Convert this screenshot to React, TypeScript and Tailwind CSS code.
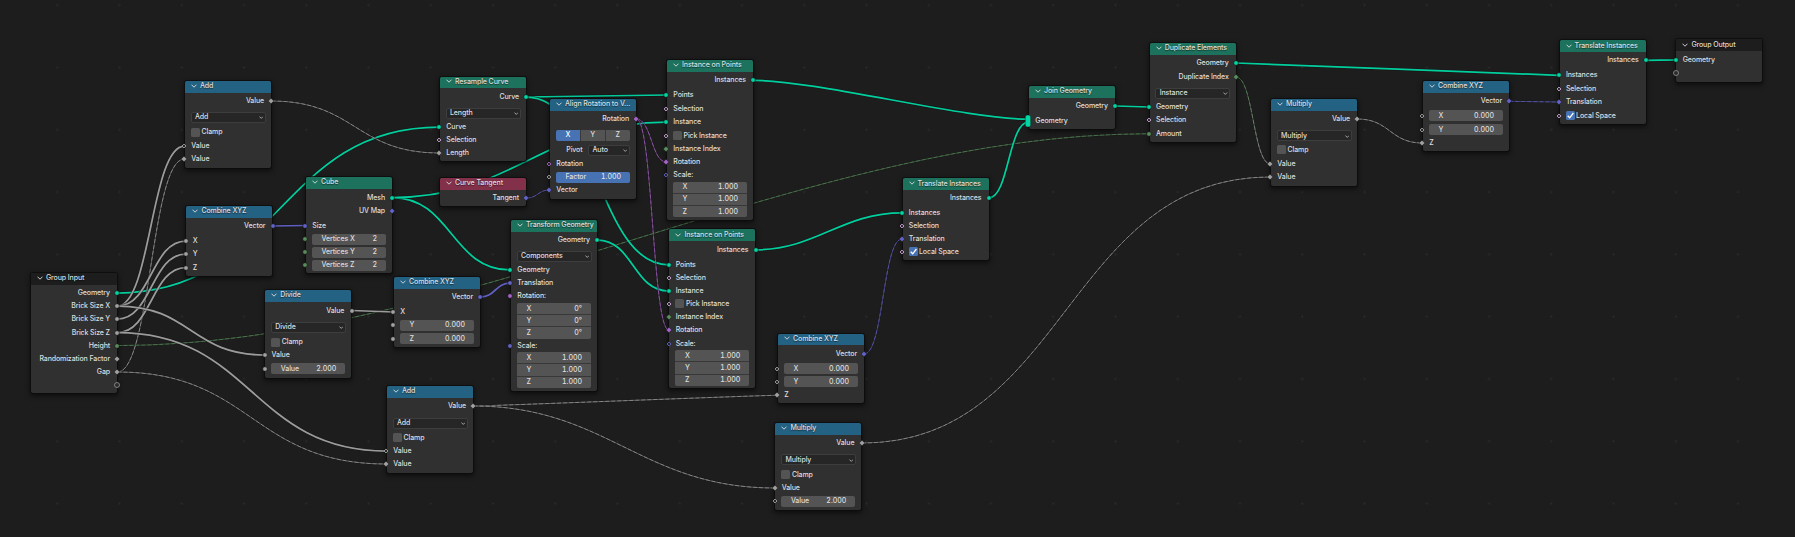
import React from "react";

type Shape = "circle" | "diamond" | "hollow" | "virtual" | "multi";
type Hue = "geo" | "val" | "vec" | "rot" | "int" | "bool";
type Row = {
  id?: string;
  y: number;
  kind?: "out" | "in" | "select" | "check" | "field" | "factor" | "stack" | "tabs" | "pivot";
  text?: string;
  value?: string | string[];
  on?: boolean;
  shape?: Shape;
  hue?: Hue;
};
type NodeDef = {
  id: string;
  title: string;
  tone: "blue" | "green" | "red" | "dark";
  tall?: boolean;
  x: number;
  y: number;
  h: number;
  rows: Row[];
};

const HUES: Record<Hue, string> = {
  geo: "#00d6a3",
  val: "#a1a1a1",
  vec: "#6363c7",
  rot: "#a663c7",
  int: "#598c5c",
  bool: "#cca6d6",
};

const W = 86;

const out = (id: string, y: number, text: string, hue: Hue, shape: Shape = "circle"): Row => ({ id, y, text, hue, shape, kind: "out" });
const inp = (id: string, y: number, text: string, hue: Hue, shape: Shape = "circle"): Row => ({ id, y, text, hue, shape, kind: "in" });
const sel = (y: number, text: string): Row => ({ y, text, kind: "select" });
const check = (y: number, text: string, on = false, hue?: Hue, shape?: Shape): Row => ({ y, text, on, hue, shape, kind: "check" });
const field = (y: number, text: string, value: string, hue: Hue, shape: Shape = "circle"): Row => ({ y, text, value, hue, shape, kind: "field" });
const stack = (y: number, value: string[]): Row => ({ y, value, kind: "stack" });

const ONES = ["1.000", "1.000", "1.000"];

const NODES: NodeDef[] = [
  { id: "gi", title: "Group Input", tone: "dark", x: 31, y: 273, h: 120, rows: [
    out("geo", 293, "Geometry", "geo"), out("x", 306, "Brick Size X", "val"), out("y", 319, "Brick Size Y", "val"),
    out("z", 332.5, "Brick Size Z", "val"), out("height", 345.5, "Height", "int"), out("rand", 358.5, "Randomization Factor", "val", "diamond"),
    out("gap", 372, "Gap", "val", "diamond"), out("v", 385, "", "val", "virtual"),
  ] },
  { id: "add1", title: "Add", tone: "blue", x: 185, y: 81, h: 87, rows: [
    out("o", 101, "Value", "val", "diamond"), sel(117, "Add"), check(132, "Clamp"),
    inp("a", 146, "Value", "val", "hollow"), inp("b", 159, "Value", "val", "diamond"),
  ] },
  { id: "c1", title: "Combine XYZ", tone: "blue", x: 186.4, y: 206, h: 69.5, rows: [
    out("o", 226, "Vector", "vec"), inp("x", 241, "X", "val"), inp("y", 254, "Y", "val"), inp("z", 267.5, "Z", "val"),
  ] },
  { id: "cube", title: "Cube", tone: "green", x: 306, y: 177, h: 96, rows: [
    out("o", 197.5, "Mesh", "geo"), out("uv", 210.5, "UV Map", "vec", "diamond"), inp("size", 225.5, "Size", "vec"),
    field(239, "Vertices X", "2", "int"), field(252, "Vertices Y", "2", "int"), field(265, "Vertices Z", "2", "int"),
  ] },
  { id: "div", title: "Divide", tone: "blue", x: 265.3, y: 290, h: 87.5, rows: [
    out("o", 310.5, "Value", "val"), sel(327, "Divide"), check(342, "Clamp"), inp("a", 355, "Value", "val"), field(368.5, "Value", "2.000", "val"),
  ] },
  { id: "c2", title: "Combine XYZ", tone: "blue", x: 394, y: 277, h: 69.5, rows: [
    out("o", 297, "Vector", "vec"), inp("x", 312, "X", "val"), field(325, "Y", "0.000", "val"), field(338.5, "Z", "0.000", "val"),
  ] },
  { id: "res", title: "Resample Curve", tone: "green", x: 440, y: 76.5, h: 84, rows: [
    out("o", 97, "Curve", "geo"), sel(113, "Length"), inp("curve", 127, "Curve", "geo"),
    inp("sel", 140, "Selection", "bool", "hollow"), inp("len", 153, "Length", "val", "diamond"),
  ] },
  { id: "tan", title: "Curve Tangent", tone: "red", x: 440, y: 178, h: 28, rows: [out("o", 198, "Tangent", "vec", "diamond")] },
  { id: "align", title: "Align Rotation to V…", tone: "blue", x: 550, y: 99, h: 99.5, rows: [
    out("o", 119, "Rotation", "rot", "diamond"), { y: 135.5, kind: "tabs" }, { y: 150, kind: "pivot", text: "Pivot", value: "Auto" },
    inp("rot", 164, "Rotation", "rot", "hollow"), { y: 177, kind: "factor", text: "Factor", value: "1.000", hue: "val", shape: "hollow" },
    inp("vec", 190, "Vector", "vec", "diamond"),
  ] },
  { id: "tg", title: "Transform Geometry", tone: "green", x: 511, y: 220, h: 170.5, rows: [
    out("o", 240, "Geometry", "geo"), sel(256, "Components"), inp("geo", 270, "Geometry", "geo"), inp("tr", 283, "Translation", "vec"),
    inp("rot", 296, "Rotation:", "rot"), stack(320.8, ["0°", "0°", "0°"]), inp("sc", 345.8, "Scale:", "vec"), stack(370, ONES),
  ] },
  { id: "iop1", title: "Instance on Points", tone: "green", x: 667, y: 60, h: 159.5, rows: [
    out("o", 80.3, "Instances", "geo"), inp("pts", 95, "Points", "geo"), inp("sel", 109, "Selection", "bool", "hollow"),
    inp("inst", 122, "Instance", "geo"), check(136, "Pick Instance", false, "bool", "hollow"), inp("idx", 149, "Instance Index", "int", "diamond"),
    inp("rot", 162, "Rotation", "rot", "diamond"), inp("sc", 175, "Scale:", "vec", "hollow"), stack(199.5, ONES),
  ] },
  { id: "iop2", title: "Instance on Points", tone: "green", tall: true, x: 669.4, y: 229, h: 159, rows: [
    out("o", 249.8, "Instances", "geo"), inp("pts", 264.8, "Points", "geo"), inp("sel", 278, "Selection", "bool", "hollow"),
    inp("inst", 291, "Instance", "geo"), check(304, "Pick Instance", false, "bool", "hollow"), inp("idx", 317, "Instance Index", "int", "diamond"),
    inp("rot", 330, "Rotation", "rot", "diamond"), inp("sc", 343.8, "Scale:", "vec", "hollow"), stack(368, ONES),
  ] },
  { id: "tr1", title: "Translate Instances", tone: "green", tall: true, x: 902.5, y: 177.5, h: 82.5, rows: [
    out("o", 197.8, "Instances", "geo"), inp("inst", 212.8, "Instances", "geo"), inp("sel", 226, "Selection", "bool", "hollow"),
    inp("tr", 239, "Translation", "vec", "diamond"), check(252, "Local Space", true, "bool", "hollow"),
  ] },
  { id: "c3", title: "Combine XYZ", tone: "blue", x: 778, y: 333.5, h: 69.5, rows: [
    out("o", 353.8, "Vector", "vec", "diamond"), field(369, "X", "0.000", "val", "hollow"), field(382, "Y", "0.000", "val", "hollow"),
    inp("z", 395.3, "Z", "val", "diamond"),
  ] },
  { id: "add2", title: "Add", tone: "blue", x: 387, y: 386, h: 87, rows: [
    out("o", 406, "Value", "val", "diamond"), sel(423, "Add"), check(437.5, "Clamp"),
    inp("a", 451, "Value", "val", "hollow"), inp("b", 464, "Value", "val", "diamond"),
  ] },
  { id: "m2", title: "Multiply", tone: "blue", x: 775.4, y: 423, h: 87, rows: [
    out("o", 443, "Value", "val", "diamond"), sel(459.5, "Multiply"), check(474.5, "Clamp"),
    inp("a", 488, "Value", "val", "diamond"), field(501, "Value", "2.000", "val", "hollow"),
  ] },
  { id: "join", title: "Join Geometry", tone: "green", x: 1029, y: 86, h: 42.5, rows: [
    out("o", 106, "Geometry", "geo"), inp("geo", 120.7, "Geometry", "geo", "multi"),
  ] },
  { id: "dup", title: "Duplicate Elements", tone: "green", x: 1149.7, y: 43, h: 99, rows: [
    out("o", 63, "Geometry", "geo"), out("idx", 77, "Duplicate Index", "int", "diamond"), sel(93, "Instance"),
    inp("geo", 107, "Geometry", "geo"), inp("sel", 120, "Selection", "bool", "hollow"), inp("amt", 133.8, "Amount", "int"),
  ] },
  { id: "m1", title: "Multiply", tone: "blue", x: 1271, y: 99, h: 87, rows: [
    out("o", 119, "Value", "val", "diamond"), sel(135.7, "Multiply"), check(150, "Clamp"),
    inp("a", 164, "Value", "val", "diamond"), inp("b", 177, "Value", "val", "diamond"),
  ] },
  { id: "c4", title: "Combine XYZ", tone: "blue", x: 1423, y: 81, h: 69.5, rows: [
    out("o", 101.3, "Vector", "vec", "diamond"), field(116, "X", "0.000", "val", "hollow"), field(129.7, "Y", "0.000", "val", "hollow"),
    inp("z", 143, "Z", "val", "diamond"),
  ] },
  { id: "tr2", title: "Translate Instances", tone: "green", tall: true, x: 1559.6, y: 40, h: 83.5, rows: [
    out("o", 60.3, "Instances", "geo"), inp("inst", 75.3, "Instances", "geo"), inp("sel", 89, "Selection", "bool", "hollow"),
    inp("tr", 102, "Translation", "vec", "diamond"), check(116, "Local Space", true, "bool", "hollow"),
  ] },
  { id: "go", title: "Group Output", tone: "dark", tall: true, x: 1676.4, y: 39, h: 42.5, rows: [
    inp("geo", 60, "Geometry", "geo"), inp("v", 73, "", "val", "virtual"),
  ] },
];

type LinkDef = [from: string, to: string, hue: Hue, dashed?: boolean, endShift?: number];
const LINKS: LinkDef[] = [
  ["gi.geo", "res.curve", "geo"],
  ["gi.height", "dup.amt", "int", true],
  ["gi.gap", "add1.b", "val", true],
  ["gi.gap", "add2.b", "val", true],
  ["gi.x", "add1.a", "val"],
  ["gi.x", "c1.x", "val"],
  ["gi.y", "c1.y", "val"],
  ["gi.z", "c1.z", "val"],
  ["gi.x", "div.a", "val"],
  ["gi.z", "add2.a", "val"],
  ["c1.o", "cube.size", "vec"],
  ["add1.o", "res.len", "val", true],
  ["div.o", "c2.x", "val"],
  ["c2.o", "tg.tr", "vec"],
  ["cube.o", "tg.geo", "geo"],
  ["cube.o", "iop1.inst", "geo"],
  ["res.o", "iop1.pts", "geo"],
  ["res.o", "iop2.pts", "geo"],
  ["tg.o", "iop2.inst", "geo"],
  ["tan.o", "align.vec", "vec", true],
  ["align.o", "iop1.rot", "rot", true],
  ["align.o", "iop2.rot", "rot", true],
  ["iop1.o", "join.geo", "geo", false, -1.5],
  ["iop2.o", "tr1.inst", "geo"],
  ["tr1.o", "join.geo", "geo", false, 1.5],
  ["c3.o", "tr1.tr", "vec", true],
  ["add2.o", "c3.z", "val", true],
  ["add2.o", "m2.a", "val", true],
  ["m2.o", "m1.b", "val", true],
  ["join.o", "dup.geo", "geo"],
  ["dup.o", "tr2.inst", "geo"],
  ["dup.idx", "m1.a", "int", true],
  ["m1.o", "c4.z", "val", true],
  ["c4.o", "tr2.tr", "vec", true],
  ["tr2.o", "go.geo", "geo"],
];

function anchor(ref: string): [number, number] {
  const [nodeId, rowId] = ref.split(".");
  const node = NODES.find((n) => n.id === nodeId)!;
  const row = node.rows.find((r) => r.id === rowId)!;
  return [row.kind === "out" ? node.x + W + 0.4 : node.x - 0.6, row.y];
}

function Links() {
  return (
    <svg className="absolute inset-0" width="1795" height="537" fill="none">
      <defs>
        <linearGradient id="intToValue" x1="0" y1="0" x2="0" y2="1">
          <stop offset="0" stopColor="#598c5c" />
          <stop offset="1" stopColor="#a1a1a1" />
        </linearGradient>
      </defs>
      {LINKS.map(([from, to, hue, dashed, endShift = 0]) => {
        const [x1, y1] = anchor(from);
        const [x2, endY] = anchor(to);
        const y2 = endY + endShift;
        const dx = Math.abs(x2 - x1);
        // Near-horizontal links get shorter handles so that they stay almost straight.
        const handle = 0.5 * dx * Math.min(1, (Math.abs(y2 - y1) / dx) * 3.25);
        const d = `M${x1} ${y1}C${x1 + handle} ${y1} ${x2 - handle} ${y2} ${x2} ${y2}`;
        const color = from === "dup.idx" ? "url(#intToValue)" : HUES[hue];
        return (
          <g key={from + to}>
            <path d={d} stroke="#141414" strokeOpacity={0.6} strokeWidth={dashed ? 1.8 : 3} />
            {dashed && <path d={d} stroke={color} strokeOpacity={0.5} strokeWidth={1} />}
            <path d={d} stroke={color} strokeOpacity={dashed ? 0.6 : 0.96} strokeWidth={dashed ? 1 : 1.75} strokeDasharray={dashed ? "4 2" : undefined} />
          </g>
        );
      })}
    </svg>
  );
}

function Socket({ shape, hue, side }: { shape: Shape; hue: Hue; side: "left" | "right" }) {
  const c = HUES[hue];
  return (
    <svg
      className={`absolute top-1/2 -translate-y-1/2 overflow-visible ${side === "left" ? "-left-[6.6px]" : "-right-[6.4px]"}`}
      width="12"
      height="12"
      viewBox="-6 -6 12 12"
    >
      {shape === "circle" && <circle r="2.3" fill={c} stroke="#121212" strokeWidth="0.6" />}
      {shape === "diamond" && <path d="M0-2.8 2.8 0 0 2.8-2.8 0Z" fill={c} stroke="#121212" strokeWidth="0.5" />}
      {shape === "hollow" && <path d="M0-1.9 1.9 0 0 1.9-1.9 0Z" fill="#1a1a1a" stroke={c} strokeWidth="1" />}
      {shape === "virtual" && <circle r="2.5" fill="#2a2a2a" stroke="#8a8a8a" strokeWidth="0.9" />}
      {shape === "multi" && <rect x="-2.7" y="-5.9" width="5.4" height="11.8" rx="2" fill={c} stroke="#121212" strokeWidth="0.4" />}
    </svg>
  );
}

function Chevron({ className }: { className: string }) {
  return (
    <svg className={className} viewBox="0 0 6 4" fill="none" stroke="currentColor" strokeWidth="0.9">
      <path d="M.5.7 3 3.2 5.5.7" />
    </svg>
  );
}

function Select({ text, className }: { text: string; className: string }) {
  return (
    <div className={`flex h-[11px] items-center justify-between rounded-[2px] border border-[#3d3d3d] bg-[#262626] pr-[1.5px] pl-[3.5px] ${className}`}>
      <span className="pb-px">{text}</span>
      <Chevron className="mt-[1px] h-[3px] w-[4.5px]" />
    </div>
  );
}

function RowBody({ row }: { row: Row }) {
  const { kind, text } = row;
  const value = typeof row.value === "string" ? row.value : "";
  switch (kind) {
    case "out":
      return <div className="flex-1 pr-[7px] pb-px text-right">{text}</div>;
    case "in":
      return <div className="flex-1 pb-px pl-[6.3px]">{text}</div>;
    case "select":
      return <Select text={text ?? ""} className="ml-[5.5px] w-[75px]" />;
    case "check":
      return (
        <div className="flex items-center gap-[1.5px] pl-[6px]">
          <div className={`flex size-[9px] items-center justify-center rounded-[1.5px] ${row.on ? "bg-[#4772b3]" : "bg-[#545454]"}`}>
            {row.on && (
              <svg className="size-[7px]" viewBox="0 0 7 7" fill="none" stroke="#fff" strokeWidth="1.3">
                <path d="M.7 3.8 2.7 5.8 6.4 1" />
              </svg>
            )}
          </div>
          <span className="pb-px">{text}</span>
        </div>
      );
    case "field":
    case "factor":
      return (
        <div className={`ml-[6px] flex h-[11px] w-[74px] items-center justify-between rounded-[2px] pr-[9px] pb-px pl-[9.5px] ${kind === "factor" ? "bg-[#4772b3]" : "bg-[#545454]"}`}>
          <span>{text}</span>
          <span className="tracking-normal">{value}</span>
        </div>
      );
    case "stack":
      return (
        <div className="ml-[6px] flex h-[35.5px] w-[74px] flex-col gap-px overflow-hidden rounded-[2px] bg-[#383838]">
          {(row.value as string[]).map((v, i) => (
            <div key={i} className="flex flex-1 items-center justify-between bg-[#545454] pr-[9px] pb-px pl-[9.5px]">
              <span>{"XYZ"[i]}</span>
              <span className="tracking-normal">{v}</span>
            </div>
          ))}
        </div>
      );
    case "tabs":
      return (
        <div className="ml-[6px] grid h-[11px] w-[73.5px] grid-cols-3 gap-px overflow-hidden rounded-[2px] bg-[#383838] text-center leading-[10.5px]">
          <span className="bg-[#4772b3] text-white">X</span>
          <span className="bg-[#545454]">Y</span>
          <span className="bg-[#545454]">Z</span>
        </div>
      );
    case "pivot":
      return (
        <div className="flex items-center">
          <span className="w-[32.5px] pb-px text-right">{text}</span>
          <Select text={value} className="ml-[5.5px] w-[41.5px]" />
        </div>
      );
    default:
      return null;
  }
}

const TONES = {
  blue: "bg-[#246283]",
  green: "bg-[#1d725e]",
  red: "bg-[#83314a]",
  dark: "bg-[#1d1d1d]",
};

function NodeCard({ node }: { node: NodeDef }) {
  let bottom = node.y + (node.tall ? 12 : 11.5);
  return (
    <section
      className="absolute flex w-[86px] flex-col rounded-[2px] bg-[#303030] shadow-[0_0_0_1px_rgba(12,12,12,0.75),0_2px_5px_1px_rgba(0,0,0,0.55)]"
      style={{ left: node.x, top: node.y, height: node.h }}
    >
      <header className={`flex shrink-0 items-center gap-[3px] rounded-t-[2px] pl-[6px] ${node.tall ? "h-[12px] pb-[0.5px]" : "h-[11.5px] pb-[2px]"} ${TONES[node.tone]}`}>
        <Chevron className="h-[4px] w-[6px] shrink-0" />
        <h2 className="whitespace-nowrap [text-shadow:0_1px_1px_rgba(0,0,0,0.5)]">{node.title}</h2>
      </header>
      {node.rows.map((row, i) => {
        const height = row.kind === "stack" ? 36 : 12;
        const top = row.y - height / 2;
        const marginTop = top - bottom;
        bottom = top + height;
        return (
          <div key={i} className="relative flex shrink-0 items-center whitespace-nowrap" style={{ marginTop, height }}>
            <RowBody row={row} />
            {row.shape && row.hue && <Socket shape={row.shape} hue={row.hue} side={row.kind === "out" ? "right" : "left"} />}
          </div>
        );
      })}
    </section>
  );
}

export default function App() {
  return (
    <main className="relative h-[537px] w-[1795px] overflow-hidden bg-[#1d1d1d] font-['Inter',sans-serif] text-[7px] leading-[9px] font-medium tracking-[-0.11px] text-[#dedede] tabular-nums">
      <svg className="absolute inset-0" width="1795" height="537">
        <defs>
          <pattern id="grid" x="26.2" y="-26" width="62.25" height="62.3" patternUnits="userSpaceOnUse">
            <circle cx="31.1" cy="31.1" r="1" fill="#2b2b2b" />
          </pattern>
        </defs>
        <rect width="1795" height="537" fill="url(#grid)" />
      </svg>
      <Links />
      {NODES.map((node) => (
        <NodeCard key={node.id} node={node} />
      ))}
    </main>
  );
}
